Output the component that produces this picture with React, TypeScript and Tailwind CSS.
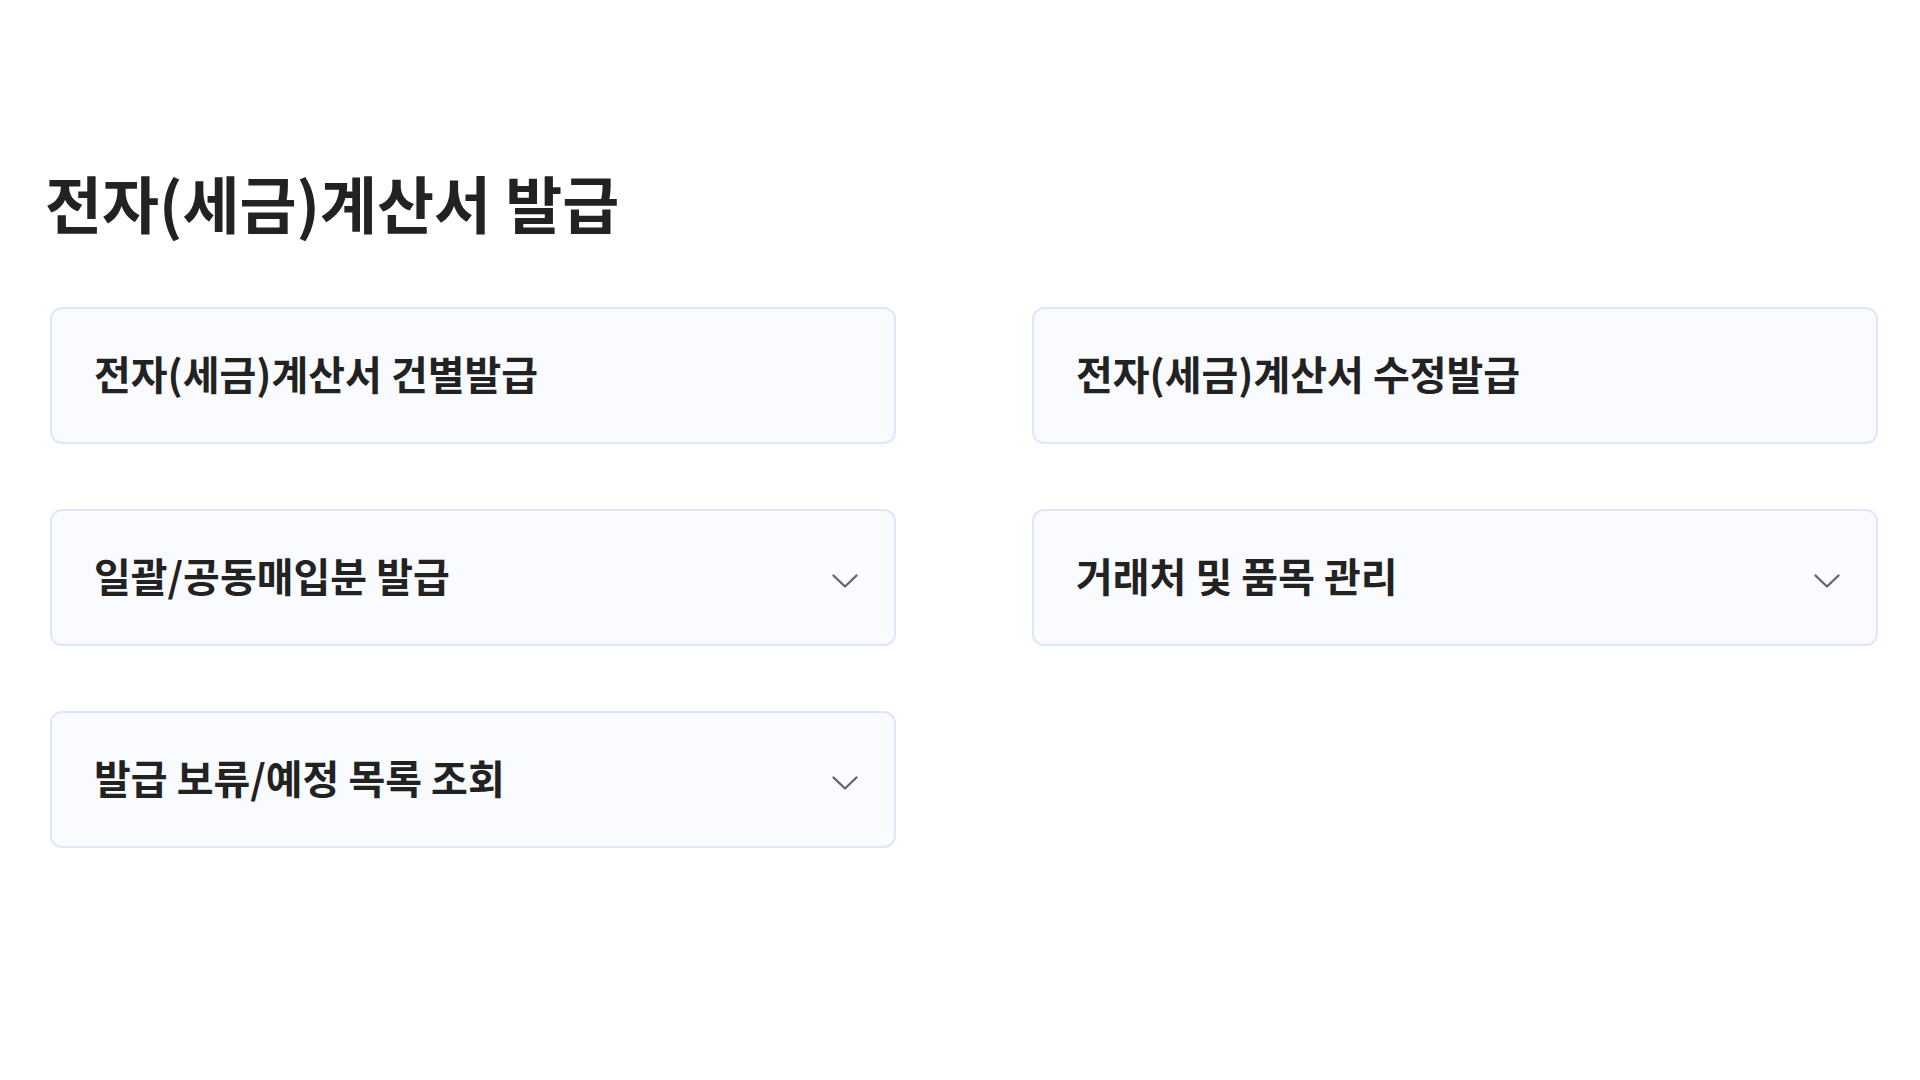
const items: { label: string; toggle: boolean }[] = [
  { label: "전자(세금)계산서 건별발급", toggle: false },
  { label: "전자(세금)계산서 수정발급", toggle: false },
  { label: "일괄/공동매입분 발급", toggle: true },
  { label: "거래처 및 품목 관리", toggle: true },
  { label: "발급 보류/예정 목록 조회", toggle: true },
];

const Chevron = () => (
  <svg width="26" height="15" viewBox="0 0 26 15" fill="none" className="translate-y-[4px]">
    <polyline
      points="1.5,1.5 13,12.5 24.5,1.5"
      stroke="#5f6168"
      strokeWidth="2.2"
      strokeLinecap="round"
      strokeLinejoin="round"
    />
  </svg>
);

export default function App() {
  return (
    <div
      className="w-[1920px] h-[1080px] bg-white text-[#222]"
      style={{ fontFamily: '"Noto Sans CJK KR", "Noto Sans", sans-serif' }}
    >
      <div className="pt-[165px] pl-[50px]">
        <h1 className="-ml-[5px] text-[62px] leading-[74px] font-bold">
          전자(세금)계산서 발급
        </h1>
        <div className="mt-[68px] grid grid-cols-[846px_846px] gap-x-[136px] gap-y-[65px]">
          {items.map((it) => (
            <button
              key={it.label}
              className="h-[137px] flex items-center justify-between rounded-[12px] border-2 border-[#dde7fc] bg-[#fafbff] pl-[42px] pr-[36px] text-left"
            >
              <span className="-translate-y-[3px] text-[40px] leading-[48px] font-bold text-[#222]">
                {it.label}
              </span>
              {it.toggle && <Chevron />}
            </button>
          ))}
        </div>
      </div>
    </div>
  );
}
